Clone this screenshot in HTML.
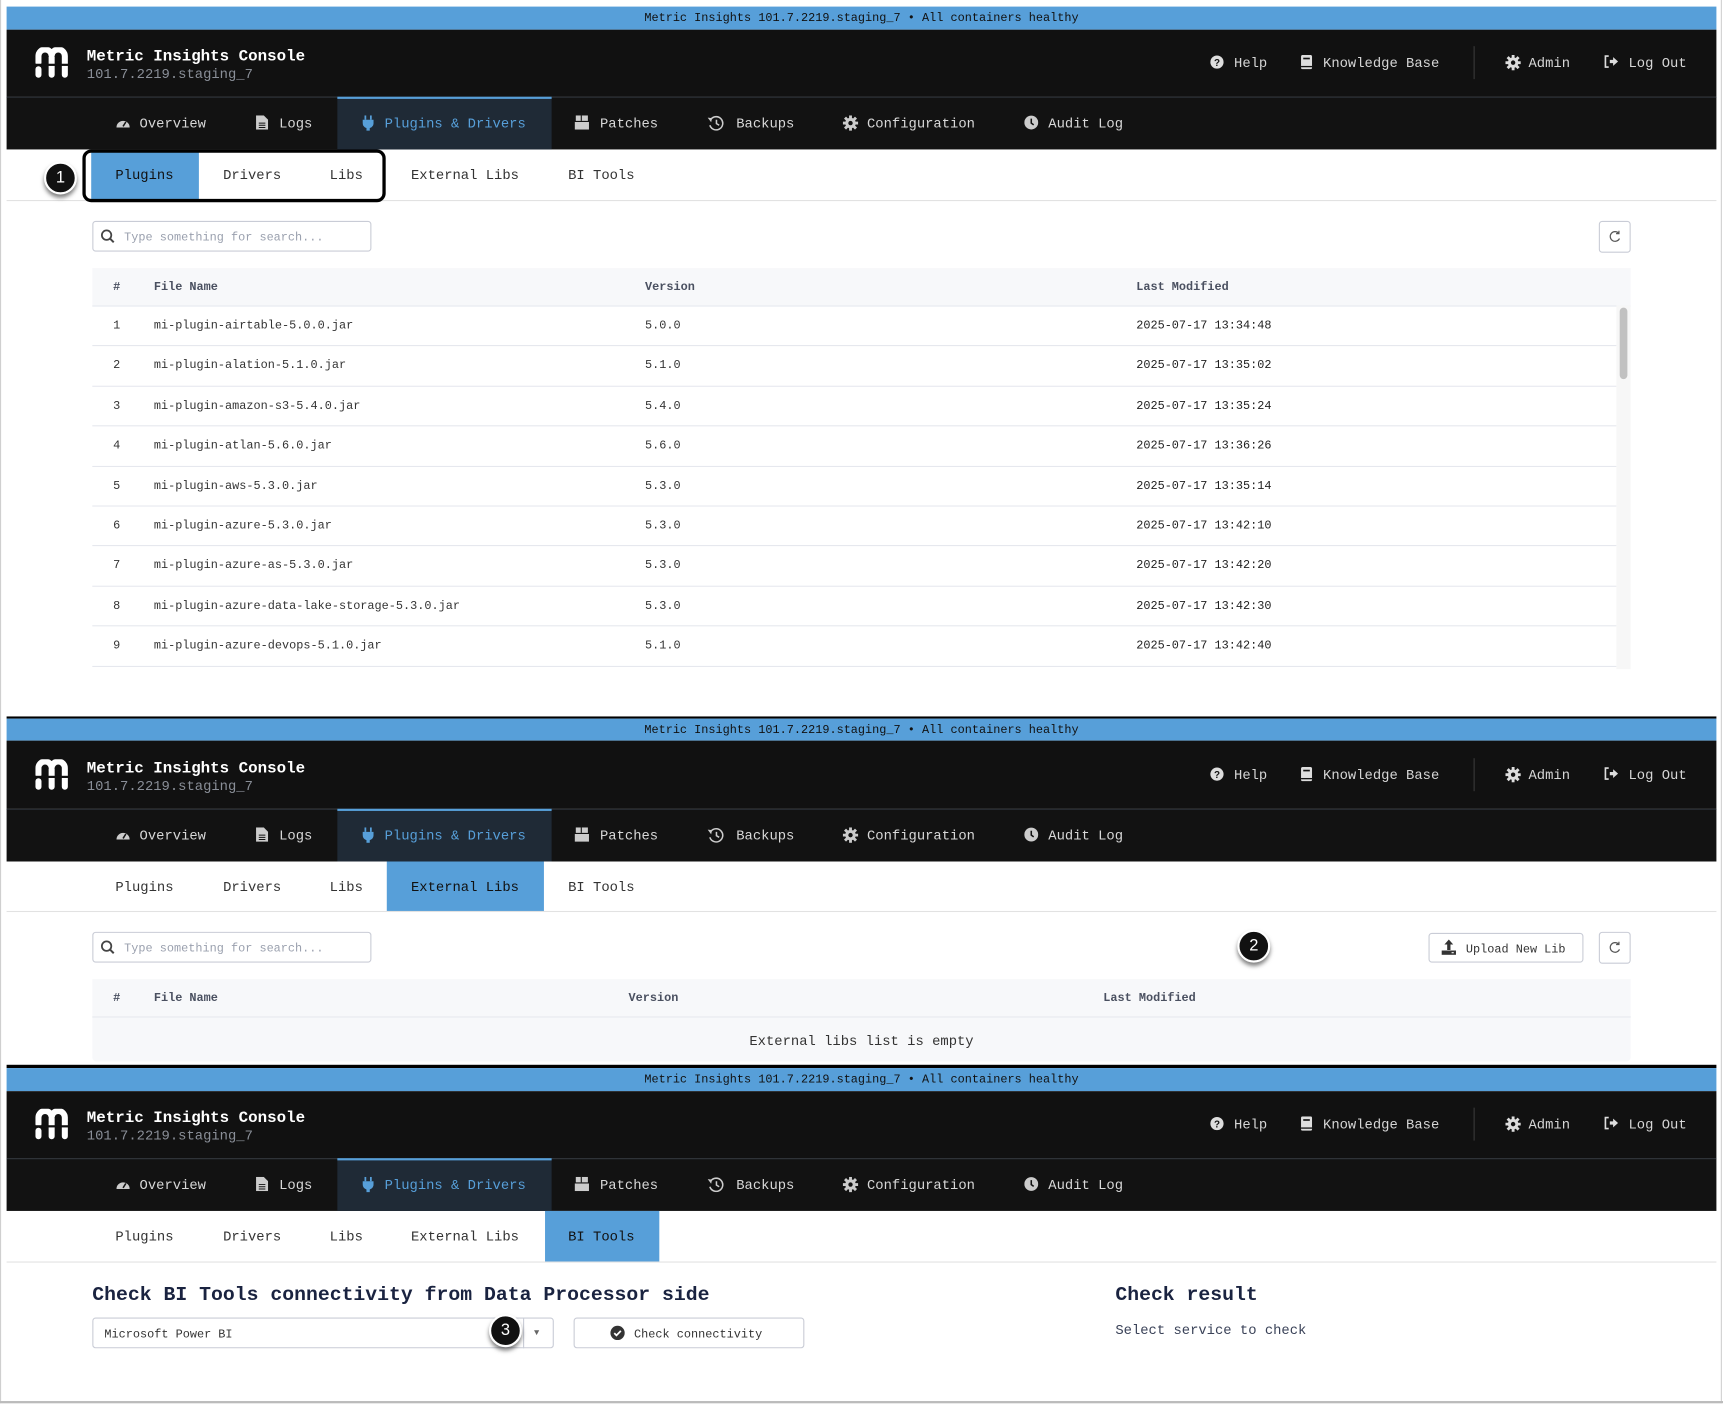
<!DOCTYPE html>
<html><head><meta charset="utf-8"><style>
*{margin:0;padding:0;box-sizing:border-box}
html,body{width:1723px;height:1404px;overflow:hidden;background:#fff}
#w{position:absolute;left:0;top:0;width:1568px;height:1278px;transform:scale(1.09885);transform-origin:0 0;font-family:"Liberation Mono",monospace;color:#333}
.a{position:absolute;white-space:nowrap}
.frame{position:absolute;left:0;top:0;width:1567px;height:1277px;border:1px solid #cfcfcf;border-top:none}
.blue{background:#579fd9;color:#111;font-size:10.8px;text-align:center;line-height:21px;padding-top:2px}
.hd{background:#111}
.nav{background:#121212;border-top:1px solid #2a2f36}
.nt{color:#d8d8d8;font-size:12.6px;margin-top:3px}
.st{font-size:12.6px;color:#333;margin-top:3px}
.tbl{font-size:10.8px;color:#333;margin-top:2px}
.th{font-size:10.8px;color:#4a5060;font-weight:bold;margin-top:2px}
.tx{margin-top:3px}
.line{position:absolute;height:1px;background:#e6e8ee}
.badge{position:absolute;width:30px;height:30px;border-radius:50%;background:#111;border:2px solid #fff;color:#fff;font-family:"Liberation Sans",sans-serif;font-size:15px;text-align:center;line-height:26px;box-shadow:0 3px 4px rgba(0,0,0,.5)}
.btn{position:absolute;border:1px solid #c9ccd6;border-radius:3px;background:#fff}
</style></head><body><div id="w">
<div class="frame"></div>

<div class="a blue" style="left:6px;top:6px;width:1556px;height:21px;line-height:19px">Metric Insights 101.7.2219.staging_7 • All containers healthy</div>
<div class="a hd" style="left:6px;top:27px;width:1556px;height:61px"></div>
<div class="a nav" style="left:6px;top:88px;width:1556px;height:48px"></div>

<div class="a" style="left:6px;top:652px;width:1556px;height:2px;background:#000"></div>
<div class="a blue" style="left:6px;top:654px;width:1556px;height:20px;line-height:18px">Metric Insights 101.7.2219.staging_7 • All containers healthy</div>
<div class="a hd" style="left:6px;top:674px;width:1556px;height:62px"></div>
<div class="a nav" style="left:6px;top:736px;width:1556px;height:48px"></div>

<div class="a" style="left:6px;top:969px;width:1556px;height:3px;background:#000"></div>
<div class="a blue" style="left:6px;top:972px;width:1556px;height:21px;line-height:19px">Metric Insights 101.7.2219.staging_7 • All containers healthy</div>
<div class="a hd" style="left:6px;top:993px;width:1556px;height:61px"></div>
<div class="a nav" style="left:6px;top:1054px;width:1556px;height:48px"></div>

<div id="hdrs"></div>

<div class="a" style="left:307px;top:88px;width:195px;height:48px;background:#1f2a36;border-top:2px solid #579fd9"></div>
<div class="a" style="left:307px;top:736px;width:195px;height:48px;background:#1f2a36;border-top:2px solid #579fd9"></div>
<div class="a" style="left:307px;top:1054px;width:195px;height:48px;background:#1f2a36;border-top:2px solid #579fd9"></div>

<div class="line" style="left:6px;top:182px;width:1556px;background:#e2e2e2"></div>
<div class="line" style="left:6px;top:829px;width:1556px;background:#e2e2e2"></div>
<div class="line" style="left:6px;top:1148px;width:1556px;background:#e2e2e2"></div>
<div class="a" style="left:83px;top:137px;width:98px;height:45px;background:#579fd9"></div>
<div class="a" style="left:352px;top:784px;width:143px;height:45px;background:#579fd9"></div>
<div class="a" style="left:496px;top:1102px;width:104px;height:46px;background:#579fd9"></div>
<div class="a" style="left:75px;top:136px;width:276px;height:48px;border:3px solid #000;border-radius:8px"></div>

<div id="subs"></div>

<div class="btn" style="left:84px;top:201px;width:254px;height:28px"></div>
<svg class="a" style="left:91px;top:208px" width="14" height="14" viewBox="0 0 14 14"><circle cx="6" cy="6" r="4.3" fill="none" stroke="#444" stroke-width="1.6"/><path d="M9 9l3.5 3.5" stroke="#444" stroke-width="1.8"/></svg>
<div class="a tx" style="left:113px;top:208px;font-size:10.8px;color:#9aa0ae">Type something for search...</div>
<div class="btn" style="left:1455px;top:201px;width:29px;height:29px"></div>
<svg class="a" style="left:1463px;top:209px" width="13" height="13" viewBox="0 0 13 13"><path d="M10 3.2A4.4 4.4 0 1 0 10.8 8" fill="none" stroke="#555" stroke-width="1.1"/><path d="M10.3 1v2.6H7.7" fill="none" stroke="#555" stroke-width="1.1"/></svg>
<div class="a" style="left:84px;top:244px;width:1400px;height:34px;background:#f7f8fa"></div>
<div class="line" style="left:84px;top:278px;width:1400px"></div>
<div class="a th" style="left:103px;top:254px">#</div>
<div class="a th" style="left:140px;top:254px">File Name</div>
<div class="a th" style="left:587px;top:254px">Version</div>
<div class="a th" style="left:1034px;top:254px">Last Modified</div>
<div id="rows"></div>
<div class="a" style="left:1471px;top:278px;width:13px;height:331px;background:#f7f7f7"></div>
<div class="a" style="left:1474px;top:280px;width:7px;height:65px;background:#c1c1c1;border-radius:4px"></div>
<div class="badge" style="left:40px;top:147px">1</div>

<div class="btn" style="left:84px;top:848px;width:254px;height:28px"></div>
<svg class="a" style="left:91px;top:855px" width="14" height="14" viewBox="0 0 14 14"><circle cx="6" cy="6" r="4.3" fill="none" stroke="#444" stroke-width="1.6"/><path d="M9 9l3.5 3.5" stroke="#444" stroke-width="1.8"/></svg>
<div class="a tx" style="left:113px;top:855px;font-size:10.8px;color:#9aa0ae">Type something for search...</div>
<div class="btn" style="left:1300px;top:849px;width:141px;height:27px"></div>
<svg class="a" style="left:1311px;top:855px" width="15" height="14" viewBox="0 0 15 14"><path d="M7.5 0l4 4.5H9v5H6v-5H3.5z" fill="#333"/><rect x="1" y="10" width="13" height="4" fill="#333"/><rect x="10" y="11.5" width="2" height="1" fill="#fff"/></svg>
<div class="a tx" style="left:1334px;top:856px;font-size:10.8px;color:#333">Upload New Lib</div>
<div class="btn" style="left:1455px;top:848px;width:29px;height:29px"></div>
<svg class="a" style="left:1463px;top:856px" width="13" height="13" viewBox="0 0 13 13"><path d="M10 3.2A4.4 4.4 0 1 0 10.8 8" fill="none" stroke="#555" stroke-width="1.1"/><path d="M10.3 1v2.6H7.7" fill="none" stroke="#555" stroke-width="1.1"/></svg>
<div class="a" style="left:84px;top:891px;width:1400px;height:75px;background:#f7f8fa;border-radius:0 0 4px 4px"></div>
<div class="line" style="left:84px;top:925px;width:1400px"></div>
<div class="a th" style="left:103px;top:901px">#</div>
<div class="a th" style="left:140px;top:901px">File Name</div>
<div class="a th" style="left:572px;top:901px">Version</div>
<div class="a th" style="left:1004px;top:901px">Last Modified</div>
<div class="a tx" style="left:84px;top:938px;width:1400px;text-align:center;font-size:12.6px;color:#333">External libs list is empty</div>
<div class="badge" style="left:1126px;top:846px">2</div>

<div class="a tx" style="left:84px;top:1166px;font-size:18px;font-weight:bold;color:#1a2340">Check BI Tools connectivity from Data Processor side</div>
<div class="btn" style="left:84px;top:1199px;width:420px;height:28px"></div>
<div class="a" style="left:476px;top:1199px;width:1px;height:28px;background:#c9ccd6"></div>
<div class="a tx" style="left:95px;top:1206px;font-size:10.8px;color:#333">Microsoft Power BI</div>
<div class="a tx" style="left:486px;top:1206px;font-size:8px;color:#666">▼</div>
<div class="btn" style="left:522px;top:1199px;width:210px;height:28px"></div>
<svg class="a" style="left:555px;top:1206px" width="14" height="14" viewBox="0 0 14 14"><circle cx="7" cy="7" r="6.5" fill="#333"/><path d="M4 7.2l2 2 4-4" fill="none" stroke="#fff" stroke-width="1.6"/></svg>
<div class="a tx" style="left:577px;top:1206px;font-size:10.8px;color:#333">Check connectivity</div>
<div class="badge" style="left:445px;top:1196px">3</div>
<div class="a tx" style="left:1015px;top:1166px;font-size:18px;font-weight:bold;color:#1a2340">Check result</div>
<div class="a tx" style="left:1015px;top:1201px;font-size:12.6px;color:#3a4258">Select service to check</div>
<div class="a" style="left:0;top:1275px;width:1568px;height:2px;background:#bbb"></div>

<script>
var H='',offs=[6,654,972];
var logo='<svg width="30" height="28" viewBox="0 0 30 28"><path d="M3 14V8a6 6 0 0 1 12 0a6 6 0 0 1 12 0v17" fill="none" stroke="#fff" stroke-width="5.5" stroke-linecap="round"/><path d="M15 9v16" stroke="#fff" stroke-width="5.5" stroke-linecap="round"/><path d="M3 20v5" stroke="#fff" stroke-width="5.5" stroke-linecap="round"/><rect x="0" y="15" width="30" height="2" fill="#111"/></svg>';
var ic={
help:'<svg width="13" height="13"><circle cx="6.5" cy="6.5" r="6" fill="#ddd"/><text x="6.5" y="10" font-size="9" font-family="Liberation Sans" font-weight="bold" text-anchor="middle" fill="#111">?</text></svg>',
kb:'<svg width="12" height="13"><rect x="1" y="0" width="10" height="13" rx="1.5" fill="#ddd"/><rect x="3" y="2.5" width="6" height="1.5" fill="#111"/><rect x="1" y="10" width="10" height="1.2" fill="#111"/></svg>',
gear:'<svg width="14" height="14" viewBox="0 0 14 14"><circle cx="7" cy="7" r="4.8" fill="#ddd"/><g stroke="#ddd" stroke-width="2.6"><path d="M7 0v14M0 7h14M2 2l10 10M12 2L2 12"/></g><circle cx="7" cy="7" r="2" fill="#111"/></svg>',
out:'<svg width="14" height="12"><path d="M5 1H2v10h3" fill="none" stroke="#ddd" stroke-width="1.5"/><path d="M6 4.5h3V2l4.5 4L9 10V7.5H6z" fill="#ddd"/></svg>'};
var nv=[['ov',105,'Overview',127],['lg',233,'Logs',254],['pl',330,'Plugins &amp; Drivers',350],['pa',523,'Patches',546],['bk',644,'Backups',670],['cf',767,'Configuration',789],['au',932,'Audit Log',954]];
var nic={
ov:'<svg width="14" height="12"><path d="M1 11a6 6 0 1 1 12 0z" fill="#ccc"/><path d="M7 10l2.5-4" stroke="#111" stroke-width="1.4"/></svg>',
lg:'<svg width="11" height="13"><path d="M0 0h7l4 4v9H0z" fill="#ccc"/><path d="M2.5 7h6M2.5 9h6M2.5 11h6" stroke="#111" stroke-width=".9"/></svg>',
pl:'<svg width="10" height="14"><path d="M2.5 0v4M7.5 0v4" stroke="#579fd9" stroke-width="1.6"/><path d="M0 4h10v3a5 5 0 0 1-3.5 4.5V14h-3v-2.5A5 5 0 0 1 0 7z" fill="#579fd9"/></svg>',
pa:'<svg width="13" height="13"><path d="M1 0h11v5H1z" fill="#ccc"/><path d="M0 6h13v7H0z" fill="#ccc"/><path d="M6 0v5" stroke="#111"/></svg>',
bk:'<svg width="15" height="14"><path d="M3 3.5A6 6 0 1 1 2 9" fill="none" stroke="#ccc" stroke-width="1.4"/><path d="M0 2l4 .5-.8 3.8z" fill="#ccc"/><path d="M8 4v3.5l2.5 1.5" fill="none" stroke="#ccc" stroke-width="1.4"/></svg>',
cf:'<svg width="14" height="14" viewBox="0 0 14 14"><circle cx="7" cy="7" r="4.8" fill="#ccc"/><g stroke="#ccc" stroke-width="2.6"><path d="M7 0v14M0 7h14M2 2l10 10M12 2L2 12"/></g><circle cx="7" cy="7" r="2" fill="#111"/></svg>',
au:'<svg width="13" height="13"><circle cx="6.5" cy="6.5" r="6.3" fill="#ccc"/><path d="M6.5 3v4l2.2 1.6" fill="none" stroke="#111" stroke-width="1.4"/></svg>'};
offs.forEach(function(o){
 var hc=o+51;
 H+='<div class="a" style="left:32px;top:'+(o+37)+'px">'+logo+'</div>';
 H+='<div class="a tx" style="left:79px;top:'+(o+35)+'px;font-size:14.4px;font-weight:bold;color:#fff">Metric Insights Console</div>';
 H+='<div class="a tx" style="left:79px;top:'+(o+52)+'px;font-size:12.6px;color:#8a8f98">101.7.2219.staging_7</div>';
 [['help',1101,'Help',1123],['kb',1183,'Knowledge Base',1204],['gear',1370,'Admin',1391],['out',1459,'Log Out',1482]].forEach(function(x){
  H+='<div class="a" style="left:'+x[1]+'px;top:'+(hc-7)+'px;line-height:0">'+ic[x[0]]+'</div>';
  H+='<div class="a nt" style="left:'+x[3]+'px;top:'+(hc-9)+'px;color:#d6d6d6">'+x[2]+'</div>';
 });
 H+='<div class="a" style="left:1341px;top:'+(hc-15)+'px;width:1px;height:30px;background:#3a3a3a"></div>';
 var nc=o+106;
 nv.forEach(function(x){
  H+='<div class="a" style="left:'+x[1]+'px;top:'+(nc-7)+'px;line-height:0;z-index:2">'+nic[x[0]]+'</div>';
  H+='<div class="a nt" style="left:'+x[3]+'px;top:'+(nc-9)+'px;z-index:2;'+(x[0]=='pl'?'color:#579fd9':'')+'">'+x[2]+'</div>';
 });
});
document.getElementById('hdrs').innerHTML=H;
var S='';
[[6,0],[654,3],[972,4]].forEach(function(p){
 var y=p[0]+144;
 [['Plugins',105],['Drivers',203],['Libs',300],['External Libs',374],['BI Tools',517]].forEach(function(t,i){
  S+='<div class="a st" style="left:'+t[1]+'px;top:'+y+'px;z-index:3;'+(i==p[1]?'color:#111;':'')+'">'+t[0]+'</div>';
 });
});
document.getElementById('subs').innerHTML=S;
var R='',d=[['mi-plugin-airtable-5.0.0.jar','5.0.0','13:34:48'],['mi-plugin-alation-5.1.0.jar','5.1.0','13:35:02'],['mi-plugin-amazon-s3-5.4.0.jar','5.4.0','13:35:24'],['mi-plugin-atlan-5.6.0.jar','5.6.0','13:36:26'],['mi-plugin-aws-5.3.0.jar','5.3.0','13:35:14'],['mi-plugin-azure-5.3.0.jar','5.3.0','13:42:10'],['mi-plugin-azure-as-5.3.0.jar','5.3.0','13:42:20'],['mi-plugin-azure-data-lake-storage-5.3.0.jar','5.3.0','13:42:30'],['mi-plugin-azure-devops-5.1.0.jar','5.1.0','13:42:40']];
d.forEach(function(r,i){
 var y=278+i*36.4;
 R+='<div class="a tbl" style="left:103px;top:'+(y+11)+'px">'+(i+1)+'</div>';
 R+='<div class="a tbl" style="left:140px;top:'+(y+11)+'px">'+r[0]+'</div>';
 R+='<div class="a tbl" style="left:587px;top:'+(y+11)+'px">'+r[1]+'</div>';
 R+='<div class="a tbl" style="left:1034px;top:'+(y+11)+'px;color:#222">2025-07-17 '+r[2]+'</div>';
 R+='<div class="line" style="left:84px;top:'+Math.round(y+36.4)+'px;width:1387px"></div>';
});
document.getElementById('rows').innerHTML=R;
</script>
</div></body></html>
